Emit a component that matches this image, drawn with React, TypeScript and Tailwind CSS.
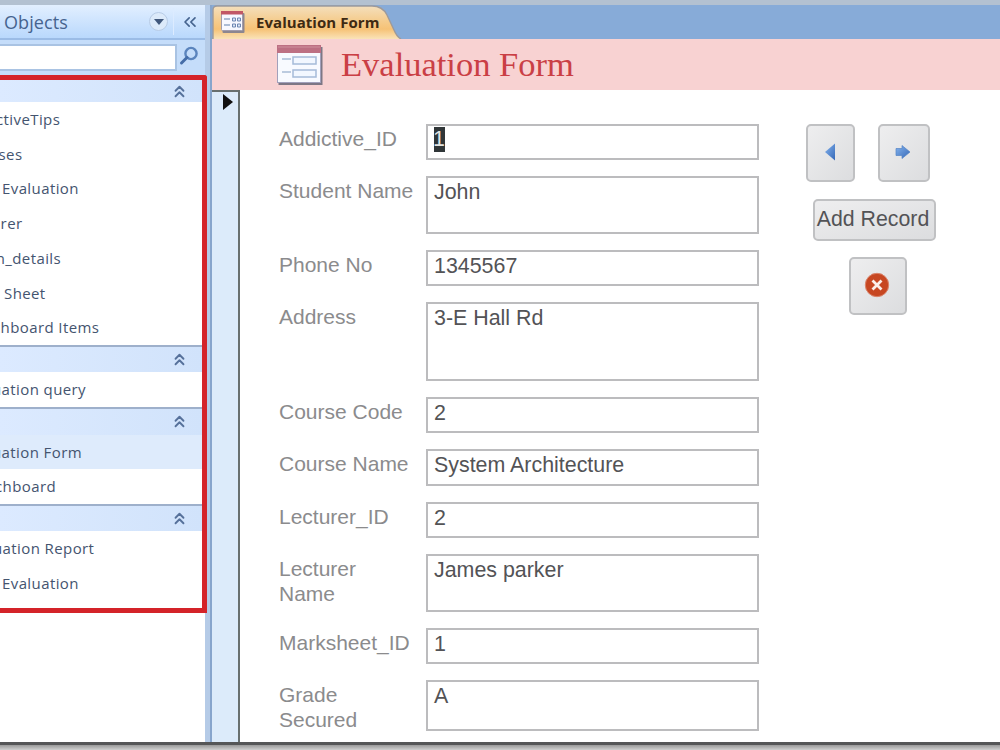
import { ChevronsLeft, ChevronsUp } from "lucide-react";
import clsx from "clsx";

const groups = [
  {
    header: "h-[22px]",
    items: [
      { text: "ctiveTips", pos: "-ml-[4px]" },
      { text: "rses", pos: "-ml-[8px]" },
      { text: "Evaluation", pos: "ml-[2px]" },
      { text: "urer", pos: "-ml-[9px]" },
      { text: "m_details", pos: "-ml-[9px]" },
      { text: "Sheet", pos: "ml-[4px]" },
      { text: "chboard Items", pos: "-ml-[7px]" },
    ],
  },
  {
    header: "h-[27px] border-t-2",
    items: [{ text: "uation query", pos: "-ml-[8px]" }],
  },
  {
    header: "h-[28px] border-t-2",
    items: [
      { text: "uation Form", pos: "-ml-[8px]", active: true },
      { text: "chboard", pos: "-ml-[5px]" },
    ],
  },
  {
    header: "h-[27px] border-t-2",
    items: [
      { text: "uation Report", pos: "-ml-[7px]" },
      { text: "Evaluation", pos: "ml-[2px]" },
    ],
  },
];

const fields = [
  { label: "Addictive_ID", value: "1", height: "h-[36px]", selected: true },
  { label: "Student Name", value: "John", height: "h-[58px]" },
  { label: "Phone No", value: "1345567", height: "h-[36px]" },
  { label: "Address", value: "3-E Hall Rd", height: "h-[79px]" },
  { label: "Course Code", value: "2", height: "h-[36px]" },
  { label: "Course Name", value: "System Architecture", height: "h-[37px]" },
  { label: "Lecturer_ID", value: "2", height: "h-[36px]" },
  { label: "Lecturer Name", value: "James parker", height: "h-[58px]", wrap: true },
  { label: "Marksheet_ID", value: "1", height: "h-[36px]" },
  { label: "Grade Secured", value: "A", height: "h-[51px]", wrap: true },
];

const button =
  "flex items-center justify-center rounded-[5px] border-2 border-[#c0c1c3] bg-linear-to-br from-[#eeeeef] to-[#dcdddf]";

const Sidebar = () => {
  return (
    <aside className="w-[205px] shrink-0 bg-white font-['Open_Sans','Noto_Sans',sans-serif]">
      <div className="flex h-[35px] items-center border-b-2 border-[#9bbce6] bg-linear-to-b from-[#e2efff] to-[#b9d8fc] text-[#46648f]">
        <span className="ml-[4px] w-[145px] pt-[2px] text-[18px] tracking-[0.1px]">
          Objects
        </span>
        <span className="flex size-[19px] items-center justify-center rounded-full border border-[#b8cce6] bg-[#dceafa]">
          <svg width="10" height="6" viewBox="0 0 10 6">
            <path d="M0 0h10L5 6z" fill="#41587c" />
          </svg>
        </span>
        <span className="ml-[5px] h-[27px] w-px bg-[#dcebff]" />
        <ChevronsLeft className="ml-[6px] size-[20px]" strokeWidth={2} />
      </div>
      <div className="flex h-[35px] items-center bg-[#c5ddfa]">
        <div className="h-[27px] w-[177px] border-2 border-l-0 border-[#a9c3e3] bg-white" />
        <svg className="-mt-[4px] ml-[2px]" width="20" height="20" viewBox="0 0 20 20" fill="none">
          <circle cx="12" cy="7.5" r="5.6" stroke="#5b84bd" strokeWidth="2.4" />
          <path d="M8 11.500L2.500 17" stroke="#456da8" strokeWidth="3" strokeLinecap="round" />
        </svg>
      </div>

      <nav className="relative z-10 h-[538px] w-[207px] overflow-hidden rounded-tr-[3px] border-y-[5px] border-r-[5px] border-[#d42329] bg-white">
        {groups.map((group, i) => (
          <div key={i}>
            <div
              className={clsx(
                "flex items-center justify-end border-[#9eb0cb] bg-linear-to-r from-[#dceaff] to-[#d1e3fb] pr-[13px]",
                group.header
              )}
            >
              <ChevronsUp className="size-[19px] text-[#56719b]" strokeWidth={2.4} />
            </div>
            {group.items.map((item) => (
              <div
                key={item.text}
                className={clsx(
                  "flex h-[34.7px] items-center whitespace-nowrap text-[15px] font-medium tracking-[0.4px] text-[#44546f]",
                  item.active && "bg-[#deebfc]"
                )}
              >
                <span className={item.pos}>{item.text}</span>
              </div>
            ))}
          </div>
        ))}
      </nav>
    </aside>
  );
};

const FormIcon = () => {
  return (
    <svg width="46" height="40" viewBox="0 0 46 40">
      <rect x="1.5" y="2" width="44" height="38" fill="#7d7785" />
      <rect x="0.5" y="0.5" width="43" height="37" fill="#f8faff" stroke="#a1a0bb" />
      <rect width="44" height="8" fill="#bd7083" />
      <path d="M1 2h42" stroke="#d0909d" />
      <path d="M5 14h9M5 27h9" stroke="#bccbe0" strokeWidth="2" />
      <rect x="16" y="12" width="23" height="7" fill="#f2f7ff" stroke="#a5bbd9" strokeWidth="1.5" />
      <rect x="16" y="25" width="23" height="7" fill="#f2f7ff" stroke="#a5bbd9" strokeWidth="1.5" />
    </svg>
  );
};

const Tab = () => {
  return (
    <div className="relative h-[34px] bg-[#87abd8]">
      <svg className="absolute top-0 left-0" width="190" height="34" viewBox="0 0 190 34">
        <defs>
          <linearGradient id="tab" x1="0" y1="0" x2="0" y2="1">
            <stop offset="0" stopColor="#f4dfbd" />
            <stop offset="0.45" stopColor="#f5cc8d" />
            <stop offset="0.7" stopColor="#f6c276" />
            <stop offset="1" stopColor="#fae3b8" />
          </linearGradient>
        </defs>
        <path
          d="M1 34V5Q1 1 5 1H160C168 1 172 4 175 10L182 25Q185 32 189 34"
          fill="url(#tab)"
          stroke="#9d9a9b"
          strokeWidth="1.4"
        />
      </svg>
      <div className="relative flex h-full items-center pl-[9px]">
        <svg width="24" height="22" viewBox="0 0 24 22">
          <rect x="1.5" y="2" width="22" height="20" rx="1" fill="#8c8690" />
          <rect x="0.5" y="0.5" width="21" height="19" rx="1" fill="#f7f8ff" stroke="#a19cac" />
          <rect width="22" height="3.5" fill="#c15766" />
          <path d="M3 8h6M3 14h6" stroke="#94a8c8" strokeWidth="1.5" />
          <path d="M11.5 7h3v3h-3zM16.5 7h3v3h-3zM11.5 13h3v3h-3zM16.5 13h3v3h-3z" stroke="#6e87b2" fill="#dbe5f5" />
        </svg>
        <span className="ml-[11px] font-['Open_Sans','Noto_Sans',sans-serif] text-[15px] font-bold tracking-[0.05px] whitespace-nowrap text-[#3e2a12]">
          Evaluation Form
        </span>
      </div>
    </div>
  );
};

const Fields = () => {
  return (
    <div className="ml-[39px] flex w-[480px] flex-col gap-[16px] pt-[34px]">
      {fields.map((field) => (
        <div key={field.label} className="flex items-start">
          <div
            className={clsx(
              "h-0 w-[147px] text-[21px] leading-[24.5px] text-[#8b8b8d]",
              !field.wrap && "whitespace-nowrap"
            )}
          >
            <div className={clsx("pt-[3px]", field.wrap && "w-[100px]")}>{field.label}</div>
          </div>
          <div
            className={clsx(
              "w-[333px] border-2 border-[#bcbcbe] px-[6px] text-[21.4px] leading-[29px] text-[#535356]",
              field.height
            )}
          >
            {field.selected ? (
              <span className="mt-px block h-[25px] w-[11px] bg-[#303638] leading-[25px] text-[#e3e5e2]">
                <span className="-ml-px">{field.value}</span>
              </span>
            ) : (
              field.value
            )}
          </div>
        </div>
      ))}
    </div>
  );
};

const Actions = () => {
  return (
    <div className="ml-[47px] flex w-[131px] flex-col items-center pt-[34px]">
      <div className="flex w-full gap-[23px]">
        <button className={clsx(button, "h-[58px] w-[49px]")}>
          <svg className="-mt-[3px] -ml-[2px]" width="12" height="18" viewBox="0 0 12 18">
            <defs>
              <linearGradient id="blue" x1="0" y1="0" x2="1" y2="1">
                <stop offset="0" stopColor="#85b4ee" />
                <stop offset="1" stopColor="#3568b7" />
              </linearGradient>
            </defs>
            <path d="M11 0.500v17L1 9z" fill="url(#blue)" />
          </svg>
        </button>
        <button className={clsx(button, "h-[58px] w-[52px]")}>
          <svg className="-mt-[3px] -ml-[3px]" width="16" height="14" viewBox="0 0 16 14">
            <path d="M1 3.500h6V0.500L15 7l-8 6.500v-3H1z" fill="url(#blue)" stroke="#5584c5" strokeWidth="0.7" />
          </svg>
        </button>
      </div>
      <button
        className={clsx(
          button,
          "mt-[17px] ml-[5px] h-[42px] w-[123px] pr-[2px] text-[21.3px] whitespace-nowrap text-[#535356]"
        )}
      >
        Add Record
      </button>
      <button className={clsx(button, "mt-[16px] ml-[13px] h-[58px] w-[58px]")}>
        <svg className="-mt-[2px] -ml-[2px]" width="26" height="26" viewBox="0 0 26 26">
          <circle cx="13" cy="13" r="11.7" fill="#c74722" stroke="#da846b" strokeWidth="1" />
          <path d="M8.500 8.500l9 9M17.500 8.500l-9 9" stroke="#fbeee9" strokeWidth="2.8" />
        </svg>
      </button>
    </div>
  );
};

export default function App() {
  return (
    <div className="flex h-[750px] w-[1000px] flex-col overflow-hidden bg-white font-['Liberation_Sans',sans-serif]">
      <div className="h-[5px] shrink-0 bg-[#b3c1d1]" />
      <div className="flex h-[737px] shrink-0">
        <Sidebar />
        <div className="w-[7px] shrink-0 border-r-2 border-[#87a5cc] bg-[#b5cbe7]" />
        <main className="flex grow flex-col">
          <Tab />
          <header className="flex h-[51px] shrink-0 items-center bg-[#f8d2d2] pl-[65px]">
            <FormIcon />
            <h1 className="ml-[18px] font-['Liberation_Serif',serif] text-[34.5px] leading-none text-[#ca3f45]">
              Evaluation Form
            </h1>
          </header>
          <div className="flex min-h-0 grow">
            <div className="w-[28px] shrink-0 border-t-2 border-r-2 border-[#68706f] bg-[#dcebfa] pt-[2px] pl-[11px]">
              <svg width="10" height="16" viewBox="0 0 10 16">
                <path d="M0 0l10 8-10 8z" fill="#111" />
              </svg>
            </div>
            <Fields />
            <Actions />
          </div>
        </main>
      </div>
      <div className="h-[8px] shrink-0 border-t-3 border-[#555657] bg-linear-to-b from-[#999] to-[#d0d0d0]" />
    </div>
  );
}
